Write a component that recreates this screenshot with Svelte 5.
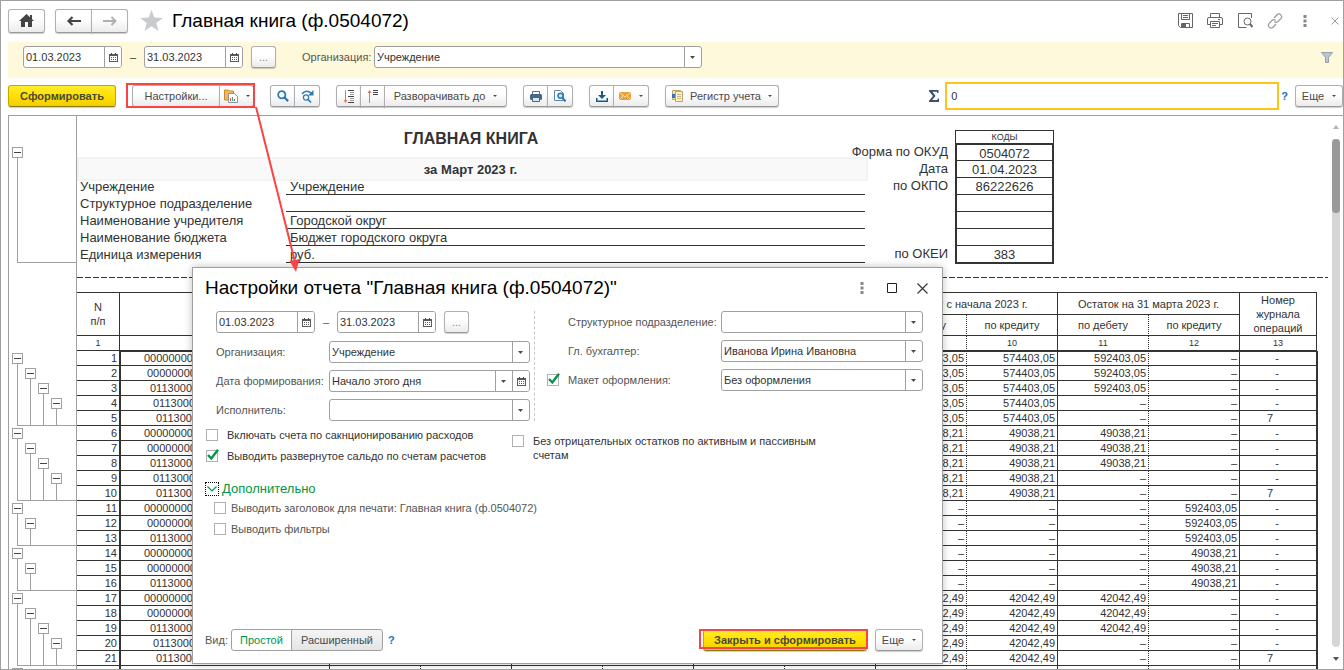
<script>
  const groups = [
    { levels: 4, rows: 5, amount: '574403,05', rest: '592403,05', side: 'debit' },
    { levels: 4, rows: 5, amount: '49038,21', rest: '49038,21', side: 'debit' },
    { levels: 2, rows: 3, amount: '–', rest: '592403,05', side: 'credit' },
    { levels: 2, rows: 3, amount: '–', rest: '49038,21', side: 'credit' },
    { levels: 4, rows: 5, amount: '42042,49', rest: '42042,49', side: 'debit' },
  ];

  const codes = ['000000000', '00000000', '0113000', '0113000', '011300'];

  const rows = groups
    .flatMap((g) =>
      Array.from({ length: g.rows }, (_, i) => ({
        code: codes[i],
        level: i,
        amount: g.amount,
        debit: g.side === 'debit' && i < 3 ? g.rest : '–',
        credit: g.side === 'credit' ? g.rest : '–',
        journal: i === 4 ? '7' : '-',
      }))
    )
    .map((r, i) => ({ ...r, n: i + 1 }));

  const fields = [
    ['Учреждение', 'Учреждение'],
    ['Структурное подразделение', ''],
    ['Наименование учредителя', 'Городской округ'],
    ['Наименование бюджета', 'Бюджет городского округа'],
    ['Единица измерения', 'руб.'],
  ];

  const okCodes = [
    ['Форма по ОКУД', '0504072'],
    ['Дата', '01.04.2023'],
    ['по ОКПО', '86222626'],
    ['', ''],
    ['', ''],
    ['', ''],
    ['по ОКЕИ', '383'],
  ];
</script>

{#snippet calendar()}
  <svg width="9" height="9" viewBox="0 0 9 9" aria-hidden="true">
    <path d="M0 1h9v8H0z" fill="#5a5a5a" />
    <path d="M2 0h1v2H2zM6 0h1v2H6z" fill="#4a4a4a" />
    <path d="M1 3h7v5H1z" fill="#fff" />
    <path d="M2 4h1v1H2zM4 4h1v1H4zM6 4h1v1H6zM2 6h1v1H2zM4 6h1v1H4zM6 6h1v1H6z" fill="#5a5a5a" />
  </svg>
{/snippet}

{#snippet caret()}
  <svg class="caret" width="5" height="3" viewBox="0 0 5 3" preserveAspectRatio="none" aria-hidden="true"><path d="M0 0h5L2.500 3z" fill="#4a4a4a" /></svg>
{/snippet}

{#snippet dots()}
  <svg width="4" height="12" viewBox="0 0 4 12" aria-hidden="true">
    <path d="M.5 0h3v3h-3zM.5 4.500h3v3h-3zM.5 9h3v3h-3z" fill="#888" />
  </svg>
{/snippet}

{#snippet dateField(label, value)}
  <span class="field date">
    <input type="text" aria-label={label} {value} />
    <button type="button" class="inner" aria-label="Календарь">{@render calendar()}</button>
  </span>
{/snippet}

{#snippet combo(id, value, withCalendar)}
  <span class="field">
    <span class="pick">
      <select {id}><option>{value}</option></select>
      {@render caret()}
    </span>
    {#if withCalendar}
      <button type="button" class="inner" aria-label="Календарь">{@render calendar()}</button>
    {/if}
  </span>
{/snippet}

{#snippet check(id, on)}
  <span class="check">
    <input type="checkbox" {id} checked={on} />
    <svg width="15" height="13" viewBox="0 0 15 13" aria-hidden="true">
      <path d="M3 6L6.300 9.500 13 .8" fill="none" stroke="#009646" stroke-width="2.400" />
    </svg>
  </span>
{/snippet}

<div class="window">
  <header class="head">
    <button type="button" class="btn nav" aria-label="Домой">
      <svg width="15" height="13" viewBox="0 0 15 13" aria-hidden="true"><path d="M7.500 0L11 3.200V1h2v4l2 2h-2v6H9V8H6v5H2V7H0z" fill="#444" /></svg>
    </button>
    <div class="group">
      <button type="button" class="btn nav" aria-label="Назад">
        <svg width="14" height="10" viewBox="0 0 14 10" aria-hidden="true"><path d="M14 5H2M5.500 1L1.500 5l4 4" fill="none" stroke="#444" stroke-width="2.200" /></svg>
      </button>
      <button type="button" class="btn nav" aria-label="Вперед">
        <svg width="14" height="10" viewBox="0 0 14 10" aria-hidden="true"><path d="M0 5h12M8.500 1l4 4-4 4" fill="none" stroke="#b0b0b0" stroke-width="2" /></svg>
      </button>
    </div>
    <svg class="star" width="23" height="21" viewBox="0 0 23 21" aria-hidden="true"><path d="M11.500 0l2.800 7.600L23 8l-6.800 5 2.400 8-7.100-4.700L4.400 21l2.400-8L0 8l8.700-.4z" fill="#c9cbcc" /></svg>
    <h1>Главная книга (ф.0504072)</h1>
    <div class="tools">
      <button type="button" class="icon" aria-label="Сохранить">
        <svg width="15" height="15" viewBox="0 0 15 15" aria-hidden="true"><g fill="none" stroke="#666"><path d="M.5.5h14v14H2.500l-2-2z" /><path d="M3.500.5v6h8v-6M5 2.500h5M5 4.500h5M3.500 14.500v-4h8v4" /></g><path d="M4 11h4v3H4z" fill="#666" /></svg>
      </button>
      <button type="button" class="icon" aria-label="Печать">
        <svg width="16" height="15" viewBox="0 0 16 15" aria-hidden="true"><g fill="none" stroke="#666"><path d="M3.500 4V.5h9V4M3.500 11.500h-3V6Q.5 4.500 2 4.500h12q1.500 0 1.500 1.500v5.500h-3" /><path d="M3.500 8.500h9v6h-9zM5 10.500h6M5 12.500h4M11 6.500h2" /></g></svg>
      </button>
      <button type="button" class="icon" aria-label="Просмотр">
        <svg width="15" height="15" viewBox="0 0 15 15" aria-hidden="true"><path d="M13.500 5V.5H.5v14h8" fill="none" stroke="#666" /><circle cx="9.500" cy="8.500" r="3.500" fill="#fff" stroke="#666" /><path d="M12 11l2.500 3" stroke="#666" stroke-width="2" /></svg>
      </button>
      <button type="button" class="icon" aria-label="Ссылка">
        <svg width="16" height="16" viewBox="0 0 16 16" aria-hidden="true"><g fill="none" stroke="#999" stroke-width="1.200"><path d="M7 5l3-3.200q2-1.800 3.800 0 1.800 1.900 0 3.800L11 8.500q-1.800 1.600-3.600 0" /><path d="M9 11l-3 3.200q-2 1.800-3.800 0-1.800-1.900 0-3.800L5 7.500q1.800-1.600 3.600 0" /></g></svg>
      </button>
      <button type="button" class="icon" aria-label="Меню">{@render dots()}</button>
      <button type="button" class="icon close" aria-label="Закрыть">
        <svg width="8" height="8" viewBox="0 0 8 8" aria-hidden="true"><path d="M.5.5l7 7M7.500.5l-7 7" stroke="#999" /></svg>
      </button>
    </div>
  </header>

  <div class="filter">
    {@render dateField('Начало периода', '01.03.2023')}
    <span class="dash">–</span>
    {@render dateField('Конец периода', '31.03.2023')}
    <button type="button" class="btn more" aria-label="Выбрать период">...</button>
    <label class="org" for="org">Организация:</label>
    <div class="org-field">{@render combo('org', 'Учреждение', false)}</div>
    <svg class="funnel" width="12" height="11" viewBox="0 0 12 11" aria-hidden="true"><path d="M.5.5h11L7.500 5.500v5h-3v-5z" fill="#b9c6d3" stroke="#93a0ab" /></svg>
  </div>

  <div class="toolbar">
    <button type="button" class="btn primary main">Сформировать</button>
    <div class="marked">
      <div class="group">
        <button type="button" class="btn settings">Настройки...</button>
        <button type="button" class="btn variant" aria-label="Варианты отчета">
          <svg width="14" height="14" viewBox="0 0 14 14" aria-hidden="true"><path d="M.5 2V1h4l1 1h4v9h-9z" fill="#efb65a" stroke="#c98b2e" /><path d="M4.500 4.500h6l3 3v6h-9z" fill="#fff" stroke="#8a94a0" /><path d="M6 9h1v3H6z" fill="#e2574c" /><path d="M8 8h1v4H8z" fill="#4caf50" /><path d="M10 10h1v2h-1z" fill="#3a7fc4" /></svg>
          {@render caret()}
        </button>
      </div>
    </div>
    <div class="group">
      <button type="button" class="btn square" aria-label="Найти">
        <svg width="12" height="12" viewBox="0 0 12 12" aria-hidden="true"><circle cx="4.800" cy="4.800" r="3.600" fill="#fff" stroke="#2b79b4" stroke-width="1.800" /><path d="M7.500 7.500l3.600 3.600" stroke="#2b79b4" stroke-width="2.200" /></svg>
      </button>
      <button type="button" class="btn square" aria-label="Найти далее">
        <svg width="13" height="13" viewBox="0 0 13 13" aria-hidden="true"><path d="M1 4q4-5 9-1" fill="none" stroke="#2b79b4" stroke-width="1.600" /><path d="M12.500 0v5.500H7z" fill="#2b79b4" /><circle cx="5" cy="7.500" r="2.600" fill="#fff" stroke="#2b79b4" stroke-width="1.300" /><path d="M7 9.500l3 3" stroke="#2b79b4" stroke-width="1.600" /></svg>
      </button>
    </div>
    <div class="group">
      <button type="button" class="btn square" aria-label="Развернуть группы">
        <svg width="12" height="13" viewBox="0 0 12 13" aria-hidden="true"><path d="M2.500 0v11" stroke="#dc7a50" /><path d="M.5 10h4l-2 3z" fill="#dc7a50" /><path d="M5 .5h6M5 6.500h6M5 12.500h6" stroke="#444" /><path d="M7 2.500h4M7 4.500h4M7 8.500h4M7 10.500h4" stroke="#999" /></svg>
      </button>
      <button type="button" class="btn square" aria-label="Свернуть группы">
        <svg width="12" height="13" viewBox="0 0 12 13" aria-hidden="true"><path d="M2.500 2v11" stroke="#dc7a50" /><path d="M.5 3h4l-2-3z" fill="#dc7a50" /><path d="M6 .5h5M6 2.500h5M6 4.500h5" stroke="#444" /></svg>
      </button>
      <button type="button" class="btn expand">Разворачивать до {@render caret()}</button>
    </div>
    <div class="group">
      <button type="button" class="btn square" aria-label="Печать">
        <svg width="12" height="11" viewBox="0 0 12 11" aria-hidden="true"><path d="M2.500.5h7v3h-7z" fill="#fff" stroke="#4d6f8f" /><path d="M1 3h10l1 1v4l-1 1H1L0 8V4z" fill="#456886" /><path d="M2.500 6.500h7v4h-7z" fill="#dbe6ef" stroke="#456886" /></svg>
      </button>
      <button type="button" class="btn square" aria-label="Предварительный просмотр">
        <svg width="12" height="12" viewBox="0 0 12 12" aria-hidden="true"><path d="M.5.5h6l3 3v7h-9z" fill="#fff" stroke="#5f87aa" /><circle cx="6.500" cy="5.800" r="2.500" fill="#cfe7f7" stroke="#2b79b4" stroke-width="1.500" /><path d="M8.400 8l3.200 3.400" stroke="#2b79b4" stroke-width="2" /></svg>
      </button>
    </div>
    <div class="group">
      <button type="button" class="btn square" aria-label="Сохранить">
        <svg width="12" height="11" viewBox="0 0 12 11" aria-hidden="true"><path d="M5 0h2v4h3L6 8 2 4h3zM0 7h1.500v2.500h9V7H12v4H0z" fill="#1b5b8c" /></svg>
      </button>
      <button type="button" class="btn mail" aria-label="Отправить">
        <svg width="12" height="8" viewBox="0 0 12 8" aria-hidden="true"><path d="M0 0h12v8H0z" fill="#e9a33b" /><path d="M0 0l6 5 6-5M0 8l4.500-4.500M12 8L7.500 3.500" fill="none" stroke="#fbe3b5" stroke-width=".9" /></svg>
        {@render caret()}
      </button>
    </div>
    <button type="button" class="btn register">
      <svg width="11" height="12" viewBox="0 0 11 12" aria-hidden="true"><path d="M.5.5h8v9h-8z" fill="#f6e4a4" stroke="#b9a668" /><path d="M3.500 1.500h7v10h-7z" fill="#fbf0c4" stroke="#b9a668" /><path d="M5 4.500h4M5 6.500h4M5 8.500h4" stroke="#c9b98a" /><path d="M0 4h3v4H0z" fill="#3e6fc0" /></svg>
      <span>Регистр учета</span>
      {@render caret()}
    </button>
    <label class="sum" for="sum" aria-label="Сумма">
      <svg width="10" height="12" viewBox="0 0 10 12" aria-hidden="true"><path d="M0 0h9.500v3H8.300L8 1.700H3.500L6.500 6l-3.300 4h5.200l.4-1.500H10V12H0v-1.300L4 6 0 1.300z" fill="#3b5166" /></svg>
    </label>
    <input id="sum" class="sum-field" type="text" value="0" />
    <a class="help" href="#help">?</a>
    <button type="button" class="btn etc">Еще {@render caret()}</button>
  </div>

  <main class="report">
    <div class="gutter">
      <div class="outline first">
        <div class="branches"><div class="branch"><button type="button" aria-label="Свернуть"></button><i></i></div></div>
        <div class="foot"></div>
      </div>
      {#each groups as g}
        <div class="outline" style="height: {g.rows * 15}px">
          <div class="branches">
            {#each Array(g.levels) as _, level}
              <div class="branch" style="margin-top: {level * 15}px"><button type="button" aria-label="Свернуть"></button><i></i></div>
            {/each}
          </div>
          <div class="foot"></div>
        </div>
      {/each}
      <div class="outline">
        <div class="branch"><button type="button" aria-label="Свернуть"></button></div>
      </div>
    </div>

    <div class="sheet">
      <div class="form-head">
        <div class="form-main">
          <h2>ГЛАВНАЯ КНИГА</h2>
          <div class="period">за Март 2023 г.</div>
          <dl>
            {#each fields as [name, value]}
              <dt>{name}</dt>
              <dd>{value}</dd>
            {/each}
          </dl>
        </div>
        <div class="codes">
          <div class="codes-title">КОДЫ</div>
          {#each okCodes as [name, value]}
            <div class="code-name"><span>{name}</span></div>
            <div class="code">{value}</div>
          {/each}
        </div>
      </div>
      <div class="page-break"></div>
      <table>
        <colgroup>
          <col class="w-num" /><col class="w-acc" />
          {#each Array(10) as _}<col class="w-sum" />{/each}
          <col class="w-jrn" />
        </colgroup>
        <thead>
          <tr class="top">
            <th rowspan="2">N<br />п/п</th>
            <th rowspan="2"></th>
            <th colspan="2"></th><th colspan="2"></th><th colspan="2"></th>
            <th colspan="2">Оборот с начала 2023 г.</th>
            <th colspan="2">Остаток на 31 марта 2023 г.</th>
            <th rowspan="2">Номер<br />журнала<br />операций</th>
          </tr>
          <tr class="mid">
            {#each Array(3) as _}
              <th class="dot"></th><th></th>
            {/each}
            {#each Array(2) as _}
              <th class="dot">по дебету</th><th>по кредиту</th>
            {/each}
          </tr>
          <tr class="nums">
            {#each Array(13) as _, i}
              <th class:dot={i > 1 && i < 12 && i % 2 === 0}>{i === 0 || i > 8 ? i + 1 : ''}</th>
            {/each}
          </tr>
        </thead>
        <tbody>
          {#each rows as r}
            <tr>
              <td>{r.n}</td>
              <td class="acc" style="padding-left: {23 + r.level * 3}px">{r.code}</td>
              {#each Array(3) as _}<td class="dot"></td><td></td>{/each}
              <td class="dot">{r.amount}</td>
              <td>{r.amount}</td>
              <td class="dot">{r.debit}</td>
              <td>{r.credit}</td>
              <td class="journal" class:filled={r.journal === '7'}>{r.journal}</td>
            </tr>
          {/each}
          <tr>
            <td></td>
            <td class="acc"></td>
            {#each Array(5) as _}<td class="dot"></td><td></td>{/each}
            <td class="journal"></td>
          </tr>
        </tbody>
      </table>
    </div>

    <div class="scroll">
      <svg width="6" height="4" viewBox="0 0 6 4" aria-hidden="true"><path d="M0 4h6L3 0z" fill="#b5b5b5" /></svg>
      <div class="track"><div class="thumb"></div></div>
      <svg width="6" height="4" viewBox="0 0 6 4" aria-hidden="true"><path d="M0 0h6L3 4z" fill="#555" /></svg>
    </div>
  </main>

  <section class="dialog" role="dialog" aria-labelledby="dlg-title">
    <div class="dlg-head">
      <h1 id="dlg-title">Настройки отчета "Главная книга (ф.0504072)"</h1>
      <button type="button" class="icon" aria-label="Меню">{@render dots()}</button>
      <button type="button" class="icon" aria-label="Развернуть">
        <svg width="10" height="10" viewBox="0 0 10 10" aria-hidden="true"><path d="M.5.5h9v9h-9z" fill="none" stroke="#222" /></svg>
      </button>
      <button type="button" class="icon" aria-label="Закрыть">
        <svg width="11" height="11" viewBox="0 0 11 11" aria-hidden="true"><path d="M.5.5l10 10M10.500.5l-10 10" stroke="#333" stroke-width="1.100" /></svg>
      </button>
    </div>

    <div class="params">
      <div class="left">
        <div class="dates">
          {@render dateField('Начало периода', '01.03.2023')}
          <span class="dash">–</span>
          {@render dateField('Конец периода', '31.03.2023')}
          <button type="button" class="btn more" aria-label="Выбрать период">...</button>
        </div>
        <div class="rows">
          <label for="d-org">Организация:</label>{@render combo('d-org', 'Учреждение', false)}
          <label for="d-date">Дата формирования:</label>{@render combo('d-date', 'Начало этого дня', true)}
          <label for="d-exec">Исполнитель:</label>{@render combo('d-exec', '', false)}
        </div>
      </div>
      <div class="right">
        <span></span><label for="d-unit">Структурное подразделение:</label>{@render combo('d-unit', '', false)}
        <span></span><label for="d-acc">Гл. бухгалтер:</label>{@render combo('d-acc', 'Иванова Ирина Ивановна', false)}
        {@render check('d-use', true)}<label for="d-use">Макет оформления:</label>{@render combo('d-layout', 'Без оформления', false)}
      </div>
    </div>

    <div class="flags">
      <div class="flag-col">
        <div class="flag">{@render check('f1', false)}<label for="f1">Включать счета по сакнционированию расходов</label></div>
        <div class="flag">{@render check('f2', true)}<label for="f2">Выводить развернутое сальдо по счетам расчетов</label></div>
      </div>
      <div class="flag wide">{@render check('f3', false)}<label for="f3">Без отрицательных остатков по активным и пассивным счетам</label></div>
    </div>

    <button type="button" class="extra">
      <span class="chev"><svg width="10" height="6" viewBox="0 0 10 6" aria-hidden="true"><path d="M.5.5L5 5 9.500.5" fill="none" stroke="#009646" stroke-width="1.200" /></svg></span>
      Дополнительно
    </button>
    <div class="flag-col sub">
      <div class="flag">{@render check('f4', false)}<label for="f4">Выводить заголовок для печати: Главная книга (ф.0504072)</label></div>
      <div class="flag">{@render check('f5', false)}<label for="f5">Выводить фильтры</label></div>
    </div>

    <div class="dlg-foot">
      <span>Вид:</span>
      <div class="group">
        <button type="button" class="btn view on">Простой</button>
        <button type="button" class="btn view">Расширенный</button>
      </div>
      <a class="help" href="#view-help">?</a>
      <div class="marked-ok"><button type="button" class="btn primary">Закрыть и сформировать</button></div>
      <button type="button" class="btn etc">Еще {@render caret()}</button>
    </div>
  </section>

  <svg class="arrow" width="60" height="170" viewBox="0 0 60 170" aria-hidden="true">
    <path d="M5 0L44 155" stroke="#fa4345" stroke-width="2" />
    <path d="M38.500 154l10-2L45 165z" fill="#fa4345" />
  </svg>
</div>

<style>
  :global(body) {
    margin: 0;
    background: #fff;
  }
  .window,
  .window * {
    box-sizing: border-box;
  }
  .window {
    position: relative;
    display: flex;
    flex-direction: column;
    height: 100vh;
    overflow: hidden;
    border: 1px solid #a0a0a0;
    font: 11px/14px 'Liberation Sans', Arial, sans-serif;
    color: #333;
    background: #fff;
  }
  button,
  input,
  select {
    font: inherit;
    color: inherit;
    margin: 0;
  }
  svg {
    display: block;
    flex: none;
  }
  h1 {
    margin: 0;
    font-size: 19px;
    line-height: 24px;
    font-weight: 400;
    color: #000;
    white-space: nowrap;
  }

  .btn {
    display: inline-flex;
    align-items: center;
    justify-content: center;
    height: 22px;
    padding: 0 8px;
    border: 1px solid #b0b0b0;
    border-bottom-color: #999;
    border-radius: 3px;
    background: linear-gradient(#fff 40%, #ebebeb);
    box-shadow: 0 1px 1px rgba(0, 0, 0, 0.2);
    color: #4a4a4a;
    white-space: nowrap;
  }
  .btn .caret {
    width: 4px;
    height: 2px;
  }
  .group {
    display: flex;
    flex: none;
  }
  .group .btn:not(:first-child) {
    margin-left: -1px;
    border-top-left-radius: 0;
    border-bottom-left-radius: 0;
  }
  .group .btn:not(:last-child) {
    border-top-right-radius: 0;
    border-bottom-right-radius: 0;
  }
  .primary {
    border-color: #c7a600;
    border-bottom-color: #8f7a10;
    background: linear-gradient(#ffec2e, #ffe000 50%, #f2ce00);
    color: #4a4a3a;
    font-weight: 700;
  }
  .square {
    width: 25px;
    padding: 0;
  }
  .square:last-child {
    width: 26px;
  }
  .icon {
    display: flex;
    align-items: center;
    justify-content: center;
    width: 30px;
    height: 24px;
    padding: 0;
    border: 0;
    background: none;
  }
  .help {
    color: #1a75bb;
    text-decoration: none;
    font-weight: 700;
  }

  .head {
    display: flex;
    align-items: center;
    flex: none;
    height: 41px;
    padding: 0 0 2px 7px;
  }
  .head .nav {
    width: 37px;
    height: 24px;
    padding: 0;
  }
  .head > .group {
    margin-left: 10px;
  }
  .star {
    margin: 0 9px 0 12px;
  }
  .tools {
    display: flex;
    margin-left: auto;
  }
  .tools .close {
    width: 23px;
    padding-left: 6px;
  }

  .filter {
    display: flex;
    align-items: center;
    flex: none;
    height: 36px;
    margin-left: 7px;
    padding: 0 10px 6px 15px;
    background: #fff9db;
  }
  .field {
    display: flex;
    flex: 1;
    min-width: 0;
    height: 22px;
    border: 1px solid #a0a0a0;
    border-radius: 3px;
    background: #fff;
    overflow: hidden;
  }
  .date {
    flex: none;
    width: 99px;
  }
  .field input {
    flex: 1;
    min-width: 0;
    padding: 0 0 0 2px;
    border: 0;
    background: none;
    outline: 0;
  }
  .inner {
    display: flex;
    align-items: center;
    justify-content: center;
    flex: none;
    width: 17px;
    padding: 0;
    border: 0;
    border-left: 1px solid #a0a0a0;
    background: #fff;
  }
  .pick {
    position: relative;
    display: flex;
    flex: 1;
    min-width: 0;
  }
  .pick::after {
    content: '';
    position: absolute;
    top: 0;
    right: 16px;
    bottom: 0;
    border-left: 1px solid #a0a0a0;
  }
  .pick .caret {
    position: absolute;
    right: 6px;
    top: 9px;
    pointer-events: none;
  }
  select {
    appearance: none;
    width: 100%;
    padding: 0 17px 0 2px;
    border: 0;
    background: none;
  }
  .dash {
    flex: none;
    width: 22px;
    text-align: center;
  }
  .more {
    flex: none;
    width: 25px;
    margin-left: 8px;
    padding: 0;
    color: #888;
  }
  .org {
    flex: none;
    width: 72px;
    margin-left: 26px;
    color: #555;
  }
  .org-field {
    display: flex;
    flex: 0 1 328px;
  }
  .funnel {
    margin-left: auto;
  }

  .toolbar {
    display: flex;
    align-items: center;
    flex: none;
    height: 37px;
    padding: 0 0 1px 7px;
  }
  .toolbar > .group,
  .toolbar > .register {
    margin-left: 16px;
  }
  .main {
    flex: none;
    width: 108px;
  }
  .marked {
    position: relative;
    flex: none;
    margin-left: 10px;
    padding-left: 6px;
  }
  .marked::after,
  .marked-ok::after {
    content: '';
    position: absolute;
    inset: -2px -1px -1px 0;
    border: 2px solid #fa4345;
    pointer-events: none;
  }
  .settings {
    width: 88px;
  }
  .variant,
  .mail {
    gap: 8px;
    width: 36px;
    padding: 0;
  }
  .marked .variant {
    width: 35px;
  }
  .expand {
    gap: 8px;
    width: 123px;
    padding: 0;
  }
  .register {
    flex: none;
    gap: 7px;
    width: 114px;
    padding: 0;
  }
  .sum {
    margin: 0 6px 0 auto;
  }
  .sum-field {
    flex: 0 1 334px;
    min-width: 80px;
    height: 28px;
    padding: 0 4px;
    border: 2px solid #fbc61c;
    background: #fff;
    outline: 0;
  }
  .toolbar .help {
    margin: 0 7px 0 2px;
  }
  .etc {
    flex: none;
    gap: 8px;
    width: 48px;
    padding: 0;
  }

  .report {
    display: flex;
    flex: 1;
    min-height: 0;
    margin-left: 7px;
    border-top: 1px solid #a0a0a0;
    border-left: 1px solid #a0a0a0;
    overflow: hidden;
  }
  .gutter {
    flex: none;
    width: 68px;
    border-right: 1px solid #a0a0a0;
  }
  .outline {
    display: flex;
    flex-direction: column;
    padding: 2px 0 0 3px;
  }
  .outline.first {
    height: 118px;
    margin: 29px 0 88px;
  }
  .branches {
    display: flex;
    flex: 1;
    gap: 2px;
  }
  .branch {
    display: flex;
    flex-direction: column;
    width: 11px;
  }
  .branch button {
    flex: none;
    height: 11px;
    padding: 0;
    border: 1px solid #a0a0a0;
    background: linear-gradient(#444, #444) center / 7px 1px no-repeat #fff;
  }
  .branch i {
    flex: 1;
    margin-left: 5px;
    border-left: 1px solid #a0a0a0;
  }
  .foot {
    height: 1px;
    margin-left: 5px;
    background: #a0a0a0;
  }

  .sheet {
    flex: 1;
    min-width: 0;
    overflow: hidden;
  }
  .form-head {
    display: flex;
    height: 148px;
    font-size: 13px;
    line-height: 16px;
  }
  .form-main {
    flex: none;
    width: 788px;
  }
  h2 {
    margin: 0;
    padding-top: 13px;
    height: 41px;
    font-size: 16px;
    line-height: 20px;
    text-align: center;
  }
  .period {
    width: 791px;
    height: 24px;
    margin-bottom: -3px;
    padding-right: 4px;
    border: 2px solid #f3f3f3;
    background: #f9f9f9;
    font-weight: 700;
    line-height: 21px;
    text-align: center;
  }
  dl {
    position: relative;
    display: grid;
    grid-template-columns: 209px 1fr;
    margin: 0;
  }
  dt {
    padding: 1px 0 0 3px;
    line-height: 16px;
  }
  dd {
    height: 17px;
    margin: 0;
    padding: 1px 0 0 4px;
    border-bottom: 1px solid #333;
  }
  .codes {
    display: grid;
    grid-template-columns: 90px 99px;
    align-content: start;
    padding-top: 14px;
  }
  .codes-title {
    grid-column: 2;
    height: 13px;
    border: 1px solid #333;
    border-bottom: 0;
    font-size: 9px;
    line-height: 12px;
    text-align: center;
  }
  .code-name {
    display: flex;
    justify-content: flex-end;
    padding: 1px 7px 0 0;
    white-space: nowrap;
  }
  .code {
    height: 17px;
    border: solid #333;
    border-width: 1px 2px 0;
    line-height: 17px;
    text-align: center;
  }
  .codes-title + .code-name + .code {
    border-top-width: 2px;
  }
  .code:last-child {
    height: 19px;
    border-bottom-width: 2px;
  }
  .page-break {
    height: 1px;
    margin: 13px 0 14px;
    background: repeating-linear-gradient(90deg, #333 0 6px, transparent 6px 8px);
  }

  table {
    width: 1240px;
    table-layout: fixed;
    border-spacing: 0;
  }
  .w-num {
    width: 43px;
  }
  .w-acc {
    width: 210px;
  }
  .w-sum {
    width: 91px;
  }
  .w-jrn {
    width: 77px;
  }
  th,
  td {
    padding: 0;
    border: solid #333;
    border-width: 0 1px 1px 0;
    overflow: hidden;
    white-space: nowrap;
  }
  th {
    font-weight: 400;
  }
  .dot {
    border-right-style: dotted;
  }
  .top {
    height: 23px;
  }
  .top th {
    border-top-width: 1px;
  }
  .mid {
    height: 21px;
  }
  .nums th {
    height: 15px;
    font-size: 9px;
    line-height: 14px;
  }
  td {
    height: 15px;
    padding-right: 2px;
    line-height: 14px;
    text-align: right;
  }
  td.acc {
    border-left-width: 1px;
    text-align: left;
  }
  td.journal {
    overflow: visible;
    text-align: center;
    box-shadow: 1px 0 #333;
  }
  td.filled {
    padding-right: 16px;
  }
  tbody tr:first-child td:not(:first-child) {
    box-shadow: inset 0 1px #333;
  }
  tbody tr:first-child td.journal {
    box-shadow: inset 0 1px #333, 1px 0 #333;
  }

  .scroll {
    display: flex;
    flex-direction: column;
    align-items: center;
    flex: none;
    width: 15px;
    padding: 9px 0 8px;
    gap: 10px;
  }
  .track {
    flex: 1;
    width: 8px;
    border-radius: 4px;
    background: #d6d6d6;
  }
  .thumb {
    width: 8px;
    height: 74px;
    border-radius: 4px;
    background: #999;
  }

  .dialog {
    position: absolute;
    left: 191px;
    top: 266px;
    display: flex;
    flex-direction: column;
    width: 751px;
    height: 397px;
    padding: 0 19px 12px 12px;
    border: 1px solid #a0a0a0;
    background: #fff;
    box-shadow: 0 0 8px rgba(0, 0, 0, 0.25);
  }
  .dlg-head {
    display: flex;
    align-items: center;
    margin-right: -14px;
    padding: 8px 0 11px;
  }
  .dlg-head h1 {
    flex: 1;
  }
  .params {
    display: flex;
    color: #555;
  }
  .left {
    flex: none;
    width: 330px;
    padding: 0 4px 0 11px;
    border-right: 1px dashed #c8c8c8;
  }
  .dialog input,
  .dialog select {
    color: #333;
  }
  .dates {
    display: flex;
    height: 22px;
  }
  .dates .dash {
    line-height: 22px;
  }
  .rows {
    display: grid;
    grid-template-columns: 113px 1fr;
    row-gap: 7px;
    align-items: center;
    margin-top: 8px;
  }
  .right {
    display: grid;
    grid-template-columns: 21px 153px 1fr;
    flex: 1;
    row-gap: 7px;
    align-items: center;
    align-content: start;
    padding-left: 12px;
  }
  .right label,
  .rows label {
    white-space: nowrap;
  }
  .check {
    position: relative;
    display: block;
    flex: none;
    width: 12px;
    height: 12px;
  }
  .check input {
    display: block;
    appearance: none;
    width: 12px;
    height: 12px;
    border: 1px solid #b0b0b0;
    background: #fff;
  }
  .check svg {
    position: absolute;
    left: -1px;
    top: -1px;
    visibility: hidden;
    pointer-events: none;
  }
  .check input:checked + svg {
    visibility: visible;
  }
  .flags {
    display: flex;
    padding: 7px 0 19px 1px;
  }
  .flag-col {
    display: grid;
    gap: 7px;
  }
  .flag {
    display: flex;
    align-items: center;
    gap: 9px;
  }
  .flags .flag-col {
    flex: none;
    width: 306px;
  }
  .wide {
    width: 330px;
    align-items: flex-start;
    padding-top: 6px;
  }
  .wide .check {
    margin-top: 1px;
  }
  .extra {
    display: flex;
    align-items: center;
    align-self: flex-start;
    gap: 3px;
    padding: 0;
    border: 0;
    background: none;
    color: #009646;
    font-size: 13px;
    line-height: 14px;
  }
  .chev {
    display: flex;
    align-items: center;
    justify-content: center;
    width: 14px;
    height: 14px;
    border: 1px dotted #000;
  }
  .sub {
    padding: 5px 0 0 9px;
    color: #555;
  }
  .sub .flag {
    gap: 5px;
  }
  .dlg-foot {
    display: flex;
    align-items: center;
    margin-top: auto;
    color: #555;
  }
  .dlg-foot > .group {
    margin-left: 3px;
  }
  .view {
    width: 92px;
    padding: 0;
    box-shadow: none;
    background: linear-gradient(#f5f5f5, #e4e4e4);
    border-color: #a0a0a0;
  }
  .view.on {
    width: 61px;
    background: #fff;
    color: #009646;
  }
  .dlg-foot .help {
    margin-left: 5px;
  }
  .marked-ok {
    position: relative;
    margin: 0 7px 0 auto;
    padding: 0 1px 0 4px;
  }
  .marked-ok::after {
    inset: 0 0 2px 0;
  }
  .marked-ok .btn {
    display: flex;
    width: 164px;
    padding: 0;
  }
  .arrow {
    position: absolute;
    left: 250px;
    top: 106px;
    pointer-events: none;
  }
</style>
